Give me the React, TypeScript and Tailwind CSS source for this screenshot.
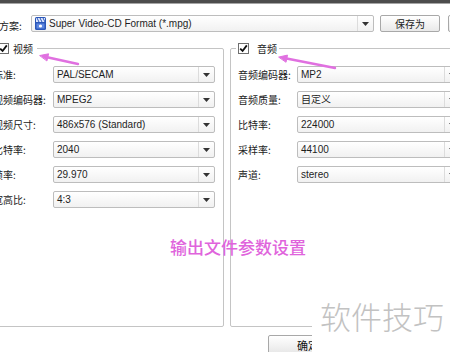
import React from "react";

const cjk = { fontFamily: '"Noto Sans CJK SC", "Noto Sans", sans-serif' };
const lat = { fontFamily: '"Liberation Sans", "Noto Sans CJK SC", sans-serif' };

function Arrow() {
  return (
    <span className="flex h-full w-[16px] shrink-0 items-center justify-center border-l border-[#dcdcdc]">
      <svg width="7" height="4" viewBox="0 0 7 4">
        <path d="M0 0 H7 L3.5 4 Z" fill="#333" />
      </svg>
    </span>
  );
}

function Select({ value, w, icon }: { value: string; w: string; icon?: boolean }) {
  return (
    <div
      className={`flex h-[17px] ${w} shrink-0 items-center rounded-[2px] border border-[#bdbdbd] bg-gradient-to-b from-white to-[#f1f1f1]`}
    >
      <div className="flex min-w-0 flex-1 items-center gap-[3px] overflow-hidden pl-[3px] text-[10px] leading-none text-[#1e1e1e]" style={lat}>
        {icon && (
          <svg width="11" height="13" viewBox="0 0 11 13" className="shrink-0">
            <rect x="0" y="0" width="11" height="13" rx="1.5" fill="#2a56b8" />
            <rect x="1" y="1" width="9" height="4" fill="#dfe8ff" />
            <path d="M2 1 L4 5 M5 1 L7 5 M8 1 L10 5" stroke="#2a56b8" strokeWidth="1" />
            <rect x="1.5" y="6.5" width="8" height="5" fill="#5d86e0" />
            <circle cx="5.5" cy="9" r="1.6" fill="#ffffff" />
          </svg>
        )}
        <span className="whitespace-nowrap">{value}</span>
      </div>
      <Arrow />
    </div>
  );
}

function Check() {
  return (
    <span className="flex h-[11px] w-[11px] items-center justify-center border border-[#6f6f6f] bg-white">
      <svg width="9" height="9" viewBox="0 0 9 9">
        <path d="M1.2 4.6 L3.6 7 L7.8 1.4" stroke="#111" strokeWidth="1.8" fill="none" />
      </svg>
    </span>
  );
}

function Label({ children, className = "" }: { children: React.ReactNode; className?: string }) {
  return (
    <span className={`whitespace-nowrap text-[10px] leading-none text-[#222] ${className}`} style={cjk}>
      {children}
    </span>
  );
}

export default function App() {
  const video: [string, string][] = [
    ["标准:", "PAL/SECAM"],
    ["视频编码器:", "MPEG2"],
    ["视频尺寸:", "486x576 (Standard)"],
    ["比特率:", "2040"],
    ["帧率:", "29.970"],
    ["宽高比:", "4:3"],
  ];
  const audio: [string, string][] = [
    ["音频编码器:", "MP2"],
    ["音频质量:", "自定义"],
    ["比特率:", "224000"],
    ["采样率:", "44100"],
    ["声道:", "stereo"],
  ];

  return (
    <div className="relative h-[352px] w-[450px] overflow-hidden bg-white">
      <div className="h-[3px] bg-[#4d4d4d]" />
      <div className="h-[1px] bg-[#a5a5a5]" />

      {/* top row */}
      <div className="mt-[11px] flex h-[17px] items-center">
        <div className="ml-[-21px] w-[52px] shrink-0">
          <Label>预设方案:</Label>
        </div>
        <Select value="Super Video-CD Format (*.mpg)" w="w-[343px]" icon />
        <button
          className="ml-[6px] h-[17px] w-[60px] shrink-0 rounded-[2px] border border-[#a8a8a8] bg-gradient-to-b from-white to-[#e9e9e9] text-[10px] leading-none text-[#222]"
          style={cjk}
        >
          保存为
        </button>
        <button className="ml-[8px] h-[17px] w-[60px] shrink-0 rounded-[2px] border border-[#a8a8a8] bg-gradient-to-b from-white to-[#e9e9e9]" />
      </div>

      {/* groups */}
      <div className="mt-[11px] flex">
        <fieldset className="ml-[-7px] h-[284px] w-[230px] shrink-0 rounded-[2px] border border-[#c4c4c4] pl-[4px] pr-[8px]">
          <legend className="flex items-center pr-[4px]">
            <Check />
            <Label className="ml-[4px] text-[#2b5fb3]">视频</Label>
          </legend>
          <div className="mt-[12px] grid grid-cols-[55px_162px] gap-y-[8px]">
            {video.map(([l, v]) => (
              <React.Fragment key={l}>
                <div className="flex h-[17px] items-center overflow-visible">
                  <Label className="ml-[-5px]">{l}</Label>
                </div>
                <Select value={v} w="w-[162px]" />
              </React.Fragment>
            ))}
          </div>
        </fieldset>
        <fieldset className="ml-[6px] h-[284px] w-[240px] shrink-0 rounded-[2px] border border-[#c4c4c4] pl-[7px]">
          <legend className="ml-[-2px] flex items-center px-[2px]">
            <Check />
            <Label className="ml-[8px] text-[#2b5fb3]">音频</Label>
          </legend>
          <div className="mt-[12px] grid grid-cols-[59px_164px] gap-y-[8px]">
            {audio.map(([l, v]) => (
              <React.Fragment key={l}>
                <div className="flex h-[17px] items-center">
                  <Label>{l}</Label>
                </div>
                <Select value={v} w="w-[164px]" />
              </React.Fragment>
            ))}
          </div>
        </fieldset>
      </div>

      {/* bottom button */}
      <div className="mt-[8px] flex pl-[268px]">
        <button
          className="h-[20px] w-[80px] shrink-0 rounded-[2px] border border-[#a8a8a8] bg-gradient-to-b from-white to-[#e6e6e6] text-[11px] leading-none text-[#111]"
          style={cjk}
        >
          确定
        </button>
      </div>

      {/* annotation overlays */}
      <div
        className="pointer-events-none absolute left-[170px] top-[238px] whitespace-nowrap text-[17px] font-medium leading-none text-[#e064dc]"
        style={cjk}
      >
        输出文件参数设置
      </div>
      <svg className="pointer-events-none absolute left-0 top-0" width="450" height="352" viewBox="0 0 450 352">
        <g stroke="#e070e0" strokeWidth="2.4" strokeLinecap="round" fill="#e070e0">
          <path d="M78 64 L46 57" fill="none" />
          <path d="M40 55.5 L48.6 53.8 L47 60.6 Z" strokeWidth="1" />
          <path d="M335 68 L284 58" fill="none" />
          <path d="M279 57 L287.5 55.1 L286.1 61.9 Z" strokeWidth="1" />
        </g>
      </svg>
      <div className="pointer-events-none absolute left-[312px] top-[296px] flex h-[56px] w-[138px] items-start bg-white pl-[8px] pt-[4px]">
        <span className="whitespace-nowrap text-[31px] font-light leading-none text-[#c2c2c2]" style={cjk}>
          软件技巧
        </span>
      </div>
    </div>
  );
}
